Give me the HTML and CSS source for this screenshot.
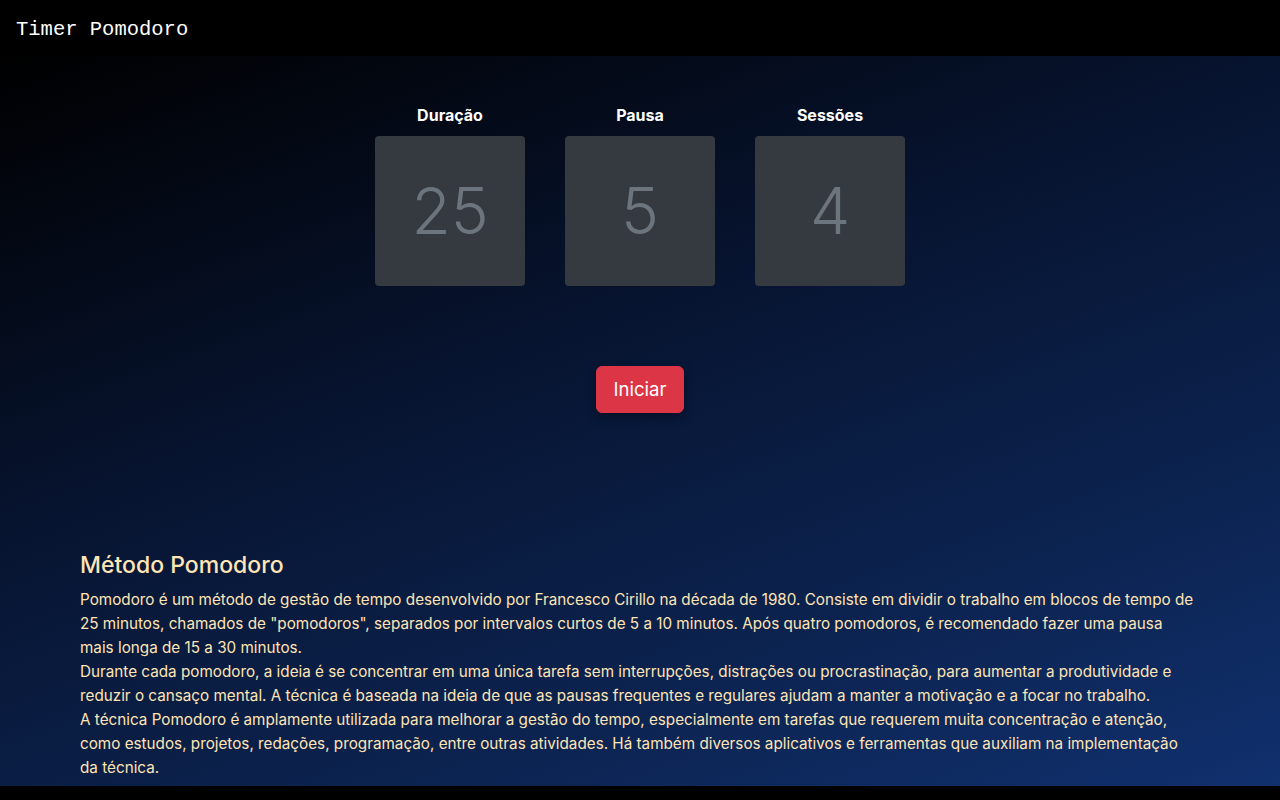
FILE: index.html
```html
<!DOCTYPE html>
<html lang="pt-BR">
<head>
<meta charset="utf-8">
<title>Timer Pomodoro</title>
<link rel="stylesheet" href="styles.css">
</head>
<body>
<header class="topbar">
  <span class="brand">Timer Pomodoro</span>
</header>
<main class="main">
  <section class="timer">
    <div class="settings">
      <div class="setting">
        <div class="setting-label">Duração</div>
        <div class="setting-box">25</div>
      </div>
      <div class="setting">
        <div class="setting-label">Pausa</div>
        <div class="setting-box">5</div>
      </div>
      <div class="setting">
        <div class="setting-label">Sessões</div>
        <div class="setting-box">4</div>
      </div>
    </div>
    <button class="btn-start" type="button">Iniciar</button>
  </section>
  <section class="about">
    <h2 class="about-title">Método Pomodoro</h2>
    <p class="about-text">Pomodoro é um método de gestão de tempo desenvolvido por Francesco Cirillo na década de 1980. Consiste em dividir o trabalho em blocos de tempo de 25 minutos, chamados de "pomodoros", separados por intervalos curtos de 5 a 10 minutos. Após quatro pomodoros, é recomendado fazer uma pausa mais longa de 15 a 30 minutos.</p>
    <p class="about-text">Durante cada pomodoro, a ideia é se concentrar em uma única tarefa sem interrupções, distrações ou procrastinação, para aumentar a produtividade e reduzir o cansaço mental. A técnica é baseada na ideia de que as pausas frequentes e regulares ajudam a manter a motivação e a focar no trabalho.</p>
    <p class="about-text">A técnica Pomodoro é amplamente utilizada para melhorar a gestão do tempo, especialmente em tarefas que requerem muita concentração e atenção, como estudos, projetos, redações, programação, entre outras atividades. Há também diversos aplicativos e ferramentas que auxiliam na implementação da técnica.</p>
  </section>
</main>
<footer class="bottombar"></footer>
</body>
</html>
```

FILE: styles.css
```css
* { box-sizing: border-box; }

html, body {
  margin: 0;
  padding: 0;
  height: 100%;
}

body {
  font-family: Inter, "Noto Sans", sans-serif;
  font-size: 16px;
  line-height: 24px;
  background: #000;
  color: #fff;
  display: flex;
  flex-direction: column;
  overflow: hidden;
}

.topbar {
  height: 56px;
  flex: 0 0 56px;
  background: #000;
  display: flex;
  align-items: center;
  padding: 0 16px;
}

.brand {
  font-family: "Liberation Mono", monospace;
  font-size: 20.5px;
  color: #fff;
  line-height: 24px;
  padding-top: 3px;
}

.main {
  flex: 0 0 730px;
  height: 730px;
  background: linear-gradient(160deg, #000000 0%, #071430 40%, #0c2452 75%, #10306e 100%);
  display: flex;
  flex-direction: column;
}

.timer {
  display: flex;
  flex-direction: column;
  align-items: center;
  padding-top: 47px;
}

.settings {
  display: flex;
  gap: 40px;
}

.setting {
  display: flex;
  flex-direction: column;
  align-items: center;
  gap: 9px;
}

.setting-label {
  font-weight: 700;
  font-size: 16px;
  line-height: 24px;
  color: #fff;
}

.setting-box {
  width: 150px;
  height: 150px;
  background: #343a40;
  border-radius: 4px;
  display: flex;
  align-items: center;
  justify-content: center;
  font-size: 64px;
  font-weight: 300;
  color: #6c757d;
  line-height: 1;
}

.btn-start {
  margin-top: 80px;
  font-family: Inter, "Noto Sans", sans-serif;
  font-size: 18.6px;
  line-height: 29px;
  padding: 8px 16px;
  border: 1px solid #dc3545;
  background: #dc3545;
  color: #fff;
  border-radius: 6px;
  box-shadow: 0 4px 10px rgba(0, 0, 0, 0.35);
  cursor: pointer;
}

.about {
  padding: 0 80px;
  margin-top: 138px;
}

.about-title {
  margin: 0 0 8px;
  font-size: 23px;
  font-weight: 500;
  line-height: 29px;
  color: #ffe4b5;
}

.about-text {
  margin: 0;
  color: #ffe4b5;
  font-size: 15.25px;
  line-height: 24px;
  max-width: 1116px;
}

.bottombar {
  flex: 1 0 14px;
  background: #000;
}
```
